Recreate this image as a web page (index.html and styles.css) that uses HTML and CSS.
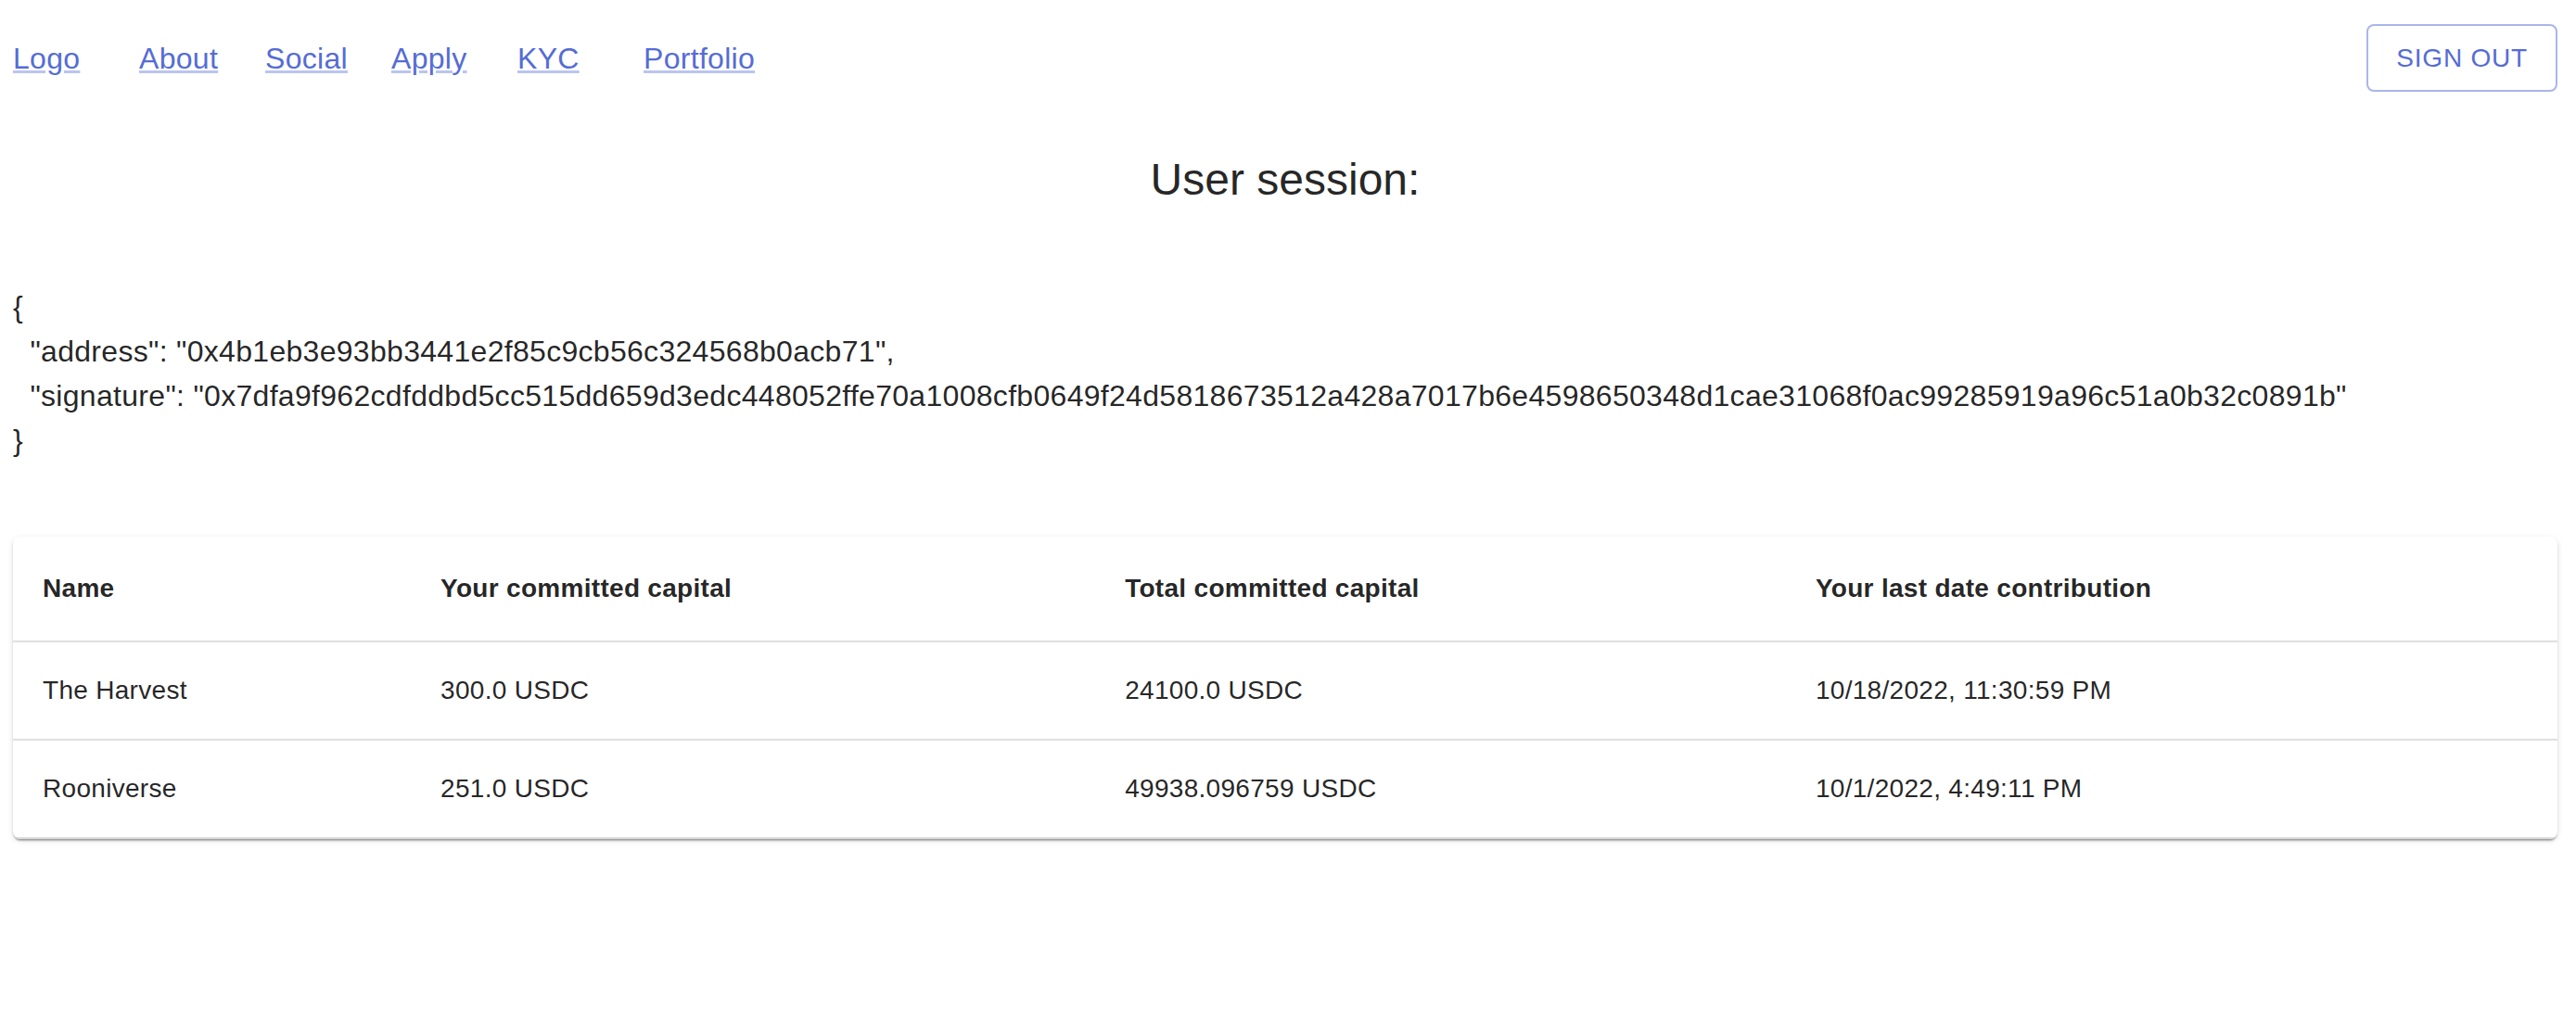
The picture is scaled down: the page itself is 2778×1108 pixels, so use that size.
FILE: index.html
```html
<!DOCTYPE html>
<html lang="en">
<head>
  <meta charset="utf-8">
  <meta name="viewport" content="width=device-width, initial-scale=1">
  <title>Portfolio</title>
  <link rel="stylesheet" href="styles.css">
</head>
<body>
  <header class="topbar">
    <nav class="nav" aria-label="Main">
      <a class="nav-link" href="#logo">Logo</a>
      <a class="nav-link" href="#about">About</a>
      <a class="nav-link" href="#social">Social</a>
      <a class="nav-link" href="#apply">Apply</a>
      <a class="nav-link" href="#kyc">KYC</a>
      <a class="nav-link" href="#portfolio">Portfolio</a>
    </nav>
    <button class="sign-out" type="button">Sign out</button>
  </header>
  <main>
    <h1 class="title">User session:</h1>
    <pre class="session">{
  "address": "0x4b1eb3e93bb3441e2f85c9cb56c324568b0acb71",
  "signature": "0x7dfa9f962cdfddbd5cc515dd659d3edc448052ffe70a1008cfb0649f24d5818673512a428a7017b6e4598650348d1cae31068f0ac99285919a96c51a0b32c0891b"
}</pre>
    <div class="card">
      <table class="table">
        <thead>
          <tr>
            <th scope="col">Name</th>
            <th scope="col">Your committed capital</th>
            <th scope="col">Total committed capital</th>
            <th scope="col">Your last date contribution</th>
          </tr>
        </thead>
        <tbody>
          <tr>
            <td>The Harvest</td>
            <td>300.0 USDC</td>
            <td>24100.0 USDC</td>
            <td>10/18/2022, 11:30:59 PM</td>
          </tr>
          <tr>
            <td>Rooniverse</td>
            <td>251.0 USDC</td>
            <td>49938.096759 USDC</td>
            <td>10/1/2022, 4:49:11 PM</td>
          </tr>
        </tbody>
      </table>
    </div>
  </main>
</body>
</html>
```
FILE: styles.css
```css
*,
*::before,
*::after {
  box-sizing: border-box;
}

body {
  margin: 0;
  padding: 26px 20px 26px 14px;
  background: #fff;
  color: rgba(0, 0, 0, 0.87);
  font-family: Helvetica, Arial, "Liberation Sans", sans-serif;
  font-size: 32px;
  line-height: 48px;
  letter-spacing: 0.00938em;
}

.topbar {
  display: flex;
  align-items: center;
  justify-content: space-between;
}

.nav {
  display: grid;
  grid-auto-flow: column;
  grid-auto-columns: 136px;
}

.nav-link {
  color: #556cd6;
  text-decoration: underline;
  text-decoration-color: rgba(85, 108, 214, 0.4);
}

.sign-out {
  padding: 10px 30px;
  border: 2px solid rgba(85, 108, 214, 0.5);
  border-radius: 8px;
  background: transparent;
  color: #556cd6;
  font: inherit;
  font-size: 28px;
  line-height: 49px;
  letter-spacing: 0.02857em;
  text-transform: uppercase;
}

.title {
  margin: 63px 0 81px;
  font-size: 48px;
  font-weight: 400;
  line-height: 64px;
  letter-spacing: 0;
  text-align: center;
}

.session {
  margin: 0 0 80px;
  font: inherit;
  white-space: pre-wrap;
  overflow-wrap: anywhere;
}

.card {
  overflow-x: auto;
  border-radius: 8px;
  background: #fff;
  box-shadow:
    0 4px 2px -2px rgba(0, 0, 0, 0.2),
    0 2px 2px 0 rgba(0, 0, 0, 0.14),
    0 2px 6px 0 rgba(0, 0, 0, 0.12);
}

.table {
  width: 100%;
  border-collapse: separate;
  border-spacing: 0;
  font-size: 28px;
  line-height: 40px;
  letter-spacing: 0.01071em;
}

.table th,
.table td {
  padding: 32px;
  border-bottom: 2px solid #e0e0e0;
  text-align: left;
}

.table th {
  font-weight: 700;
  line-height: 48px;
}
```
